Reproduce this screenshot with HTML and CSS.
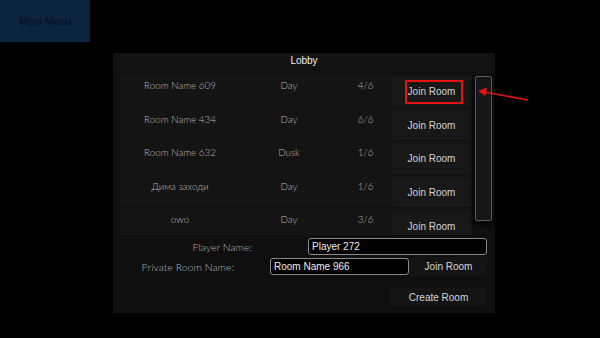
FILE: index.html
```html
<!DOCTYPE html>
<html lang="en">
<head>
    <meta charset="UTF-8">
    <title>Lobby</title>
    <link rel="stylesheet" href="styles.css">
</head>
<body>
    <div class="screen">
        <button class="main-menu">Main Menu</button>

        <div class="lobby">
            <div class="lobby-title">Lobby</div>

            <div class="list-wrap">
                <div class="room-list">
                    <div class="room-row">
                        <span class="cell name">Room Name 609</span>
                        <span class="cell">Day</span>
                        <span class="cell">4/6</span>
                        <button class="join-btn">Join Room</button>
                    </div>
                    <div class="room-row">
                        <span class="cell name">Room Name 434</span>
                        <span class="cell">Day</span>
                        <span class="cell">6/6</span>
                        <button class="join-btn">Join Room</button>
                    </div>
                    <div class="room-row">
                        <span class="cell name">Room Name 632</span>
                        <span class="cell">Dusk</span>
                        <span class="cell">1/6</span>
                        <button class="join-btn">Join Room</button>
                    </div>
                    <div class="room-row">
                        <span class="cell name">Дима заходи</span>
                        <span class="cell">Day</span>
                        <span class="cell">1/6</span>
                        <button class="join-btn">Join Room</button>
                    </div>
                    <div class="room-row">
                        <span class="cell name">owo</span>
                        <span class="cell">Day</span>
                        <span class="cell">3/6</span>
                        <button class="join-btn">Join Room</button>
                    </div>
                </div>
                <div class="scrollbar"><div class="thumb"></div></div>
            </div>

            <div class="form">
                <div class="form-row player-row">
                    <label class="form-label">Player Name:</label>
                    <input class="text-field player-field" type="text" value="Player 272">
                </div>
                <div class="form-row private-row">
                    <label class="form-label">Private Room Name:</label>
                    <input class="text-field private-field" type="text" value="Room Name 966">
                    <button class="dark-btn join-private">Join Room</button>
                </div>
                <div class="form-row create-row">
                    <button class="dark-btn create-btn">Create Room</button>
                </div>
            </div>
        </div>

        <!-- annotation -->
        <div class="highlight-box"></div>
        <svg class="arrow" width="52" height="16" viewBox="0 0 52 16">
            <line x1="51" y1="14" x2="7" y2="6" stroke="#e41212" stroke-width="1.6"/>
            <polygon points="1,5 10,1.5 8.5,10" fill="#e41212"/>
        </svg>
    </div>
</body>
</html>
```

FILE: styles.css
```css
body {
    margin: 0;
    background: #000;
    font-family: 'Liberation Sans', Arial, sans-serif;
}
.screen {
    position: relative;
    width: 600px;
    height: 338px;
    overflow: hidden;
}
button {
    font-family: 'Liberation Sans', Arial, sans-serif;
    border: none;
    cursor: pointer;
}
.main-menu {
    display: block;
    width: 90px;
    height: 42px;
    background: #0b2440;
    color: #06111d;
    font-size: 10.5px;
    padding: 0;
}
.lobby {
    margin: 11px 0 0 113px;
    width: 382px;
    height: 260px;
    background: #0f0f0f;
    display: flex;
    flex-direction: column;
}
.lobby-title {
    height: 20px;
    line-height: 16px;
    text-align: center;
    color: #f0f0f0;
    font-size: 10px;
    background: #111;
}
.list-wrap {
    display: flex;
    gap: 2px;
    padding: 1px 0 0 7px;
    height: 162px;
}
.room-list {
    width: 352px;
    height: 161px;
    overflow: hidden;
    background: #111;
}
.room-row {
    display: grid;
    grid-template-columns: 120px 98px 55px 77px;
    height: 33.6px;
    background: #141414;
    border-bottom: 1px solid #0e0e0e;
    box-sizing: border-box;
}
.cell {
    text-align: center;
    padding-top: 5px;
    font-family: Lato, 'DejaVu Sans', sans-serif;
    font-weight: 300;
    font-size: 9.8px;
    color: #b8b8b8;
}
.join-btn {
    margin: 3px 0 0;
    background: #181818;
    color: #d4d4d4;
    font-size: 10px;
    padding: 0;
}
.scrollbar {
    width: 19px;
    height: 146px;
    margin-top: 2px;
    border-radius: 3px;
    background: #0a0a0a;
    box-shadow: 0 3px 4px rgba(0, 0, 0, 0.8);
}
.thumb {
    height: 143px;
    margin: 0 1px;
    border: 1px solid #5a5a5a;
    border-radius: 2px;
    background: #161616;
}
.form {
    display: flex;
    flex-direction: column;
    padding: 1px 8px 0 0;
}
.form-row {
    display: flex;
    align-items: center;
    justify-content: flex-end;
}
.form-label {
    font-family: Lato, 'DejaVu Sans', sans-serif;
    font-weight: 300;
    font-size: 10.5px;
    color: #b0b0b0;
}
.text-field {
    box-sizing: border-box;
    height: 17px;
    padding: 0 3px;
    border: 1px solid #8a8a8a;
    border-radius: 3px;
    background: #000;
    color: #ececec;
    font-family: 'Liberation Sans', Arial, sans-serif;
    font-size: 10px;
    outline: none;
}
.player-row {
    height: 19px;
}
.player-field {
    width: 179px;
    margin-left: 56px;
}
.private-row {
    height: 21px;
}
.private-field {
    width: 139px;
    margin-left: 36px;
}
.dark-btn {
    background: #141414;
    color: #d4d4d4;
    font-size: 10px;
    padding: 0;
}
.join-private {
    width: 77px;
    height: 19px;
    margin-left: 1px;
}
.create-row {
    margin-top: 11px;
}
.create-btn {
    width: 97px;
    height: 18px;
}
.highlight-box {
    position: absolute;
    left: 405px;
    top: 80px;
    width: 54px;
    height: 20px;
    border: 2px solid #e41212;
}
.arrow {
    position: absolute;
    left: 477px;
    top: 86px;
}
```
